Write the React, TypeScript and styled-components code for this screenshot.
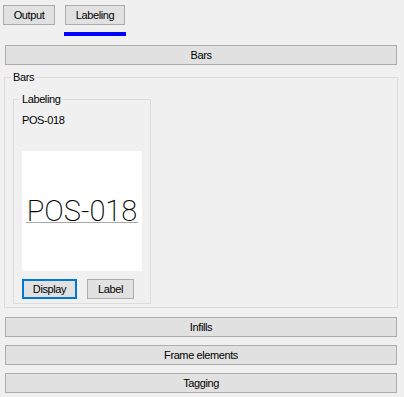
import styled, { createGlobalStyle } from "styled-components";

const GlobalStyle = createGlobalStyle`
  html, body {
    margin: 0;
    padding: 0;
    background-color: #f0f0f0;
  }
  body {
    font-family: "Liberation Sans", Arial, sans-serif;
    font-size: 11px;
    letter-spacing: -0.4px;
    color: #000;
  }
`;

const Wrap = styled.div`
  width: 404px;
  height: 397px;
  background-color: #f0f0f0;
  overflow: hidden;
  display: flex;
  flex-direction: column;
`;

const TabBar = styled.div`
  display: flex;
  align-items: flex-start;
  gap: 10px;
  padding: 5px 0 0 3px;
`;

const TabColumn = styled.div`
  display: flex;
  flex-direction: column;
  align-items: flex-start;
`;

const Button = styled.button<{ width?: number; focused?: boolean }>`
  box-sizing: border-box;
  height: 20px;
  width: ${(props) => (props.width ? `${props.width}px` : "auto")};
  margin: 0;
  padding: 0;
  background-color: #e1e1e1;
  border: ${(props) => (props.focused ? "2px solid #0078d7" : "1px solid #adadad")};
  border-radius: 0;
  font-family: "Liberation Sans", Arial, sans-serif;
  font-weight: 400;
  font-size: 11px;
  letter-spacing: -0.4px;
  color: #000;
  line-height: 16px;
`;

const TabIndicator = styled.div`
  width: 62px;
  height: 4px;
  margin: 7px 0 0 -1px;
  background-color: #0000ff;
`;

const SectionButton = styled(Button)`
  width: 392px;
  margin-left: 5px;
  flex-shrink: 0;
`;

const GroupBox = styled.fieldset`
  box-sizing: border-box;
  margin: 0;
  padding: 0;
  min-width: 0;
  border: 1px solid #dcdcdc;
`;

const Legend = styled.legend`
  margin-left: 6px;
  padding: 0 2px;
  line-height: 13px;
  font-size: 11px;
`;

const OuterGroup = styled(GroupBox)`
  width: 394px;
  margin: 6px 0 0 4px;
`;

const OuterBody = styled.div`
  padding: 9px 0 3px 8px;
`;

const InnerGroup = styled(GroupBox)`
  width: 138px;
`;

const InnerBody = styled.div`
  display: flex;
  flex-direction: column;
  align-items: flex-start;
  padding: 8px 0 4px 8px;
`;

const Caption = styled.div`
  line-height: 13px;
`;

const Preview = styled.div`
  width: 120px;
  height: 120px;
  margin-top: 24px;
  background-color: #fff;
  display: flex;
  align-items: flex-start;
  justify-content: center;
`;

const PreviewText = styled.div`
  margin-top: 49px;
  padding: 0 1px;
  font-family: Roboto, Inter, "DejaVu Sans", sans-serif;
  font-weight: 200;
  font-size: 29px;
  letter-spacing: 0;
  line-height: 22px;
  color: #000;
  white-space: nowrap;
  border-bottom: 1px solid #a8a8a8;
`;

const ButtonRow = styled.div`
  display: flex;
  gap: 10px;
  margin-top: 8px;
`;

const SectionList = styled.div`
  display: flex;
  flex-direction: column;
  gap: 8px;
  margin-top: 9px;
`;

function App() {
  return (
    <Wrap>
      <GlobalStyle />
      <TabBar>
        <Button width={52}>Output</Button>
        <TabColumn>
          <Button width={60}>Labeling</Button>
          <TabIndicator />
        </TabColumn>
      </TabBar>
      <SectionButton style={{ marginTop: 9 }}>Bars</SectionButton>
      <OuterGroup>
        <Legend>Bars</Legend>
        <OuterBody>
          <InnerGroup>
            <Legend>Labeling</Legend>
            <InnerBody>
              <Caption>POS-018</Caption>
              <Preview>
                <PreviewText>POS-018</PreviewText>
              </Preview>
              <ButtonRow>
                <Button width={55} focused>
                  Display
                </Button>
                <Button width={47}>Label</Button>
              </ButtonRow>
            </InnerBody>
          </InnerGroup>
        </OuterBody>
      </OuterGroup>
      <SectionList>
        <SectionButton>Infills</SectionButton>
        <SectionButton>Frame elements</SectionButton>
        <SectionButton>Tagging</SectionButton>
      </SectionList>
    </Wrap>
  );
}

export default App;
